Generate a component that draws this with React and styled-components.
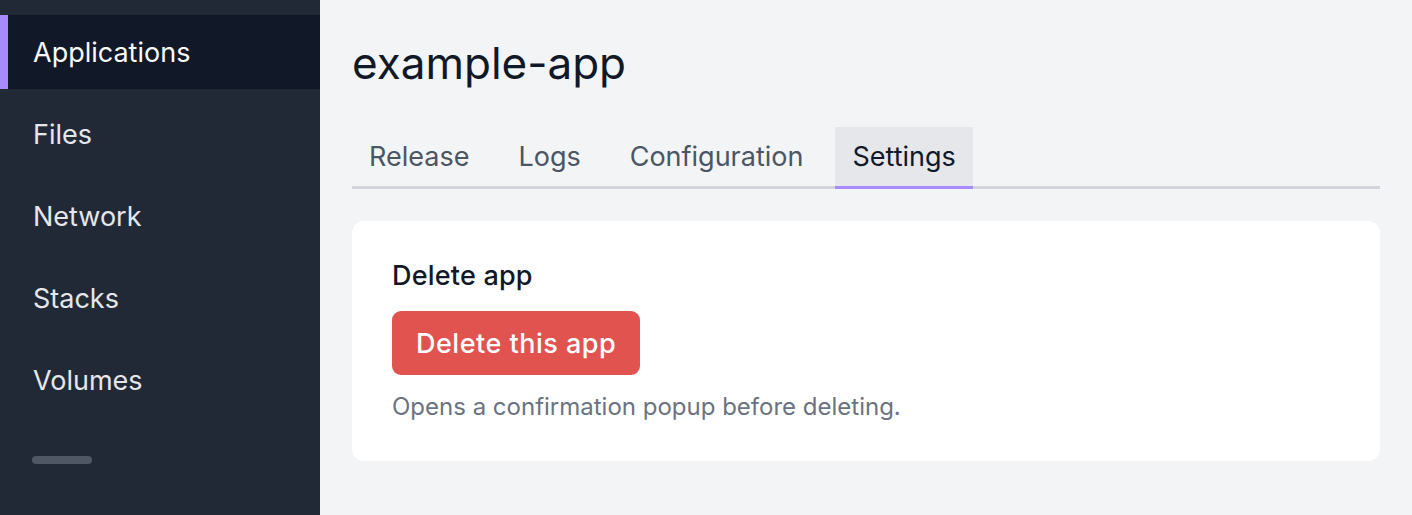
import styled, { createGlobalStyle } from 'styled-components'

const GlobalStyle = createGlobalStyle`
    html, body {
        margin: 0;
        padding: 0;
        background: #f3f4f6;
        font-family: Inter, "Noto Sans", sans-serif;
    }
`;

const Layout = styled.div`
    display: flex;
    min-height: 515px;
`;

const Sidebar = styled.nav`
    width: 320px;
    flex-shrink: 0;
    background: #222936;
    padding-top: 15px;
    display: flex;
    flex-direction: column;
    gap: 8px;
`;

const NavItem = styled.div`
    height: 74px;
    display: flex;
    align-items: center;
    padding-left: 25px;
    font-size: 27px;
    color: ${(p) => (p.$active ? '#f9fafb' : '#e5e7eb')};
    background: ${(p) => (p.$active ? '#111827' : 'transparent')};
    border-left: 8px solid ${(p) => (p.$active ? '#a78bfa' : 'transparent')};
    cursor: pointer;
`;

const Divider = styled.div`
    width: 60px;
    height: 8px;
    border-radius: 4px;
    background: #4f5664;
    margin: 31px 0 0 32px;
`;

const Main = styled.main`
    flex: 1;
    padding: 30px 32px 0 32px;
`;

const Title = styled.h1`
    margin: 0;
    font-size: 44px;
    font-weight: 400;
    line-height: 66px;
    color: #111827;
`;

const Tabs = styled.div`
    display: flex;
    gap: 15px;
    margin-top: 31px;
    border-bottom: 3px solid #d1d5db;
`;

const Tab = styled.div`
    height: 59px;
    display: flex;
    align-items: center;
    padding: 0 17px;
    margin-bottom: -3px;
    font-size: 27px;
    color: ${(p) => (p.$active ? '#111827' : '#4b5563')};
    background: ${(p) => (p.$active ? '#e5e7eb' : 'transparent')};
    border-bottom: 3px solid ${(p) => (p.$active ? '#a78bfa' : 'transparent')};
    cursor: pointer;
`;

const Card = styled.section`
    margin-top: 32px;
    background: #ffffff;
    border-radius: 12px;
    padding: 38px 40px 38px 40px;
`;

const CardTitle = styled.h2`
    margin: 0;
    font-size: 27px;
    font-weight: 500;
    line-height: 34px;
    letter-spacing: 0.2px;
    color: #111827;
`;

const DangerButton = styled.button`
    margin-top: 18px;
    height: 64px;
    padding: 0 24px;
    border: none;
    border-radius: 9px;
    background: #e0534f;
    color: #ffffff;
    font-family: inherit;
    font-size: 27px;
    font-weight: 500;
    letter-spacing: 0.5px;
    cursor: pointer;
`;

const Help = styled.p`
    margin: 16px 0 0 0;
    font-size: 24px;
    line-height: 32px;
    color: #6b7280;
`;

const navItems = ['Applications', 'Files', 'Network', 'Stacks', 'Volumes'];
const tabs = ['Release', 'Logs', 'Configuration', 'Settings'];

const App = () => {
    return (
        <Layout>
            <GlobalStyle />
            <Sidebar>
                {navItems.map((n) => (
                    <NavItem key={n} $active={n === 'Applications'}>{n}</NavItem>
                ))}
                <Divider />
            </Sidebar>
            <Main>
                <Title>example-app</Title>
                <Tabs>
                    {tabs.map((t) => (
                        <Tab key={t} $active={t === 'Settings'}>{t}</Tab>
                    ))}
                </Tabs>
                <Card>
                    <CardTitle>Delete app</CardTitle>
                    <DangerButton>Delete this app</DangerButton>
                    <Help>Opens a confirmation popup before deleting.</Help>
                </Card>
            </Main>
        </Layout>
    )
}

export default App
